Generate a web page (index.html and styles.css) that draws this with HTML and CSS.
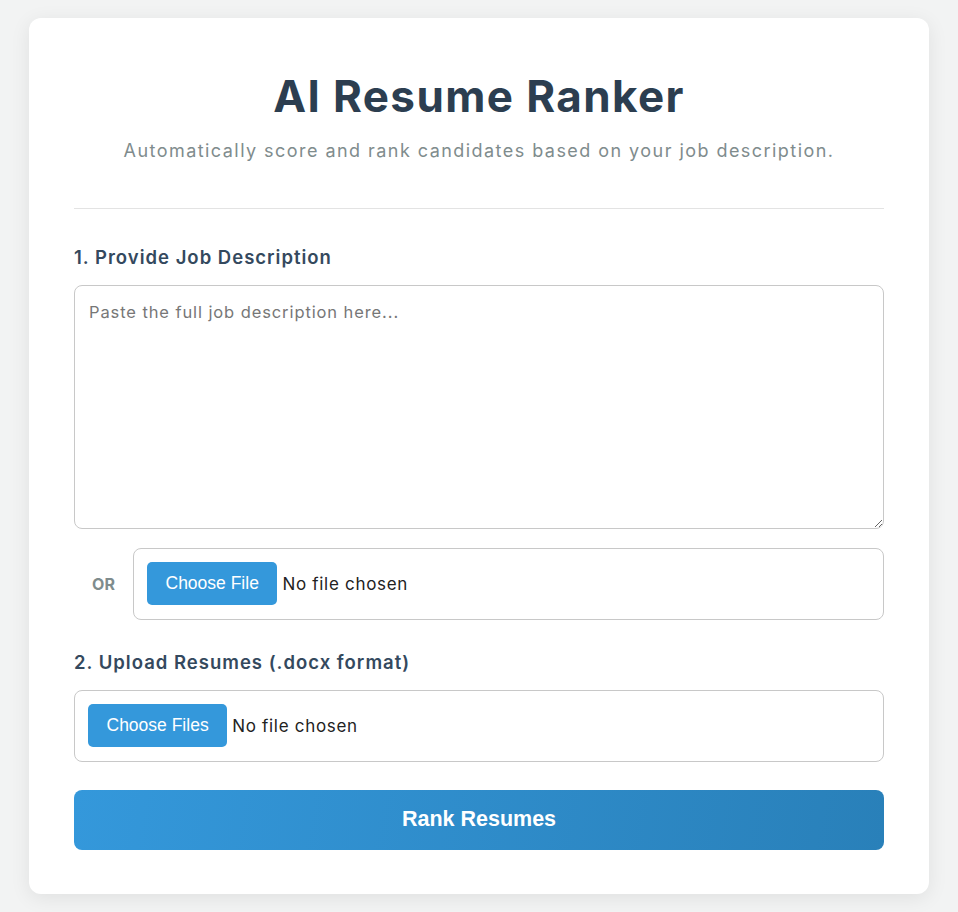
FILE: index.html
```html
<!DOCTYPE html>
<html lang="en">
<head>
<meta charset="utf-8">
<title>AI Resume Ranker</title>
<link rel="stylesheet" href="styles.css">
</head>
<body>
<main class="card">
  <header class="head">
    <h1 class="title">AI Resume Ranker</h1>
    <p class="subtitle">Automatically score and rank candidates based on your job description.</p>
  </header>
  <section class="group">
    <h2 class="label">1. Provide Job Description</h2>
    <textarea class="jd" placeholder="Paste the full job description here..."></textarea>
    <div class="or-row">
      <span class="or">OR</span>
      <div class="filebox"><span class="filebtn">Choose File</span><span class="filetext">No file chosen</span></div>
    </div>
  </section>
  <section class="group group-resumes">
    <h2 class="label">2. Upload Resumes (.docx format)</h2>
    <div class="filebox"><span class="filebtn">Choose Files</span><span class="filetext">No file chosen</span></div>
  </section>
  <button class="rank">Rank Resumes</button>
</main>
</body>
</html>
```
FILE: styles.css
```css
html, body { margin: 0; padding: 0; }
body {
  background: #f2f3f3;
  font-family: "Inter", "Open Sans", sans-serif;
  padding: 18px 29px;
  box-sizing: border-box;
  min-height: 912px;
}
.card {
  max-width: 900px;
  margin: 0 auto;
  background: #fff;
  border-radius: 12px;
  padding: 45px 45px 44px;
  box-sizing: border-box;
  box-shadow: 0 4px 20px rgba(0,0,0,0.08);
}
.head {
  text-align: center;
  border-bottom: 1px solid #e3e3e3;
  padding-bottom: 44px;
  margin-bottom: 36px;
}
.title {
  margin: 0;
  font-size: 44px;
  font-weight: 700;
  color: #2c3e50;
  line-height: 1.5;
  letter-spacing: 1.4px;
}
.subtitle {
  margin: 8px 0 0;
  font-size: 18px;
  color: #7f8c8d;
  line-height: 1.5;
  letter-spacing: 1.45px;
}
.group { margin-bottom: 30px; }
.group-resumes { margin-bottom: 28px; }
.label {
  margin: 0 0 14px;
  font-size: 18.5px;
  font-weight: 600;
  color: #34495e;
  line-height: 1.4;
  letter-spacing: 1px;
}
.jd {
  display: block;
  width: 100%;
  height: 244px;
  box-sizing: border-box;
  border: 1px solid #c8c8c8;
  border-radius: 8px;
  padding: 16px 14px;
  font-family: inherit;
  font-size: 16.5px;
  letter-spacing: 0.9px;
  color: #333;
  resize: vertical;
  margin: 0;
}
.jd::placeholder { color: #777; }
.or-row {
  display: flex;
  align-items: center;
  margin-top: 19px;
}
.or {
  width: 59px;
  text-align: center;
  font-weight: 700;
  font-size: 16px;
  color: #7f8c8d;
}
.filebox {
  flex: 1;
  display: flex;
  align-items: center;
  height: 72px;
  box-sizing: border-box;
  border: 1px solid #c8c8c8;
  border-radius: 8px;
  padding: 0 13px;
}
.filebtn {
  background: #3498db;
  color: #fff;
  font-family: "Liberation Sans", Arial, sans-serif;
  font-size: 17.5px;
  height: 43px;
  display: flex;
  align-items: center;
  padding: 0 18.5px;
  border-radius: 5px;
  margin-right: 5px;
}
.filetext {
  font-size: 17px;
  letter-spacing: 0.7px;
  color: #222;
}
.rank {
  display: block;
  width: 100%;
  height: 60px;
  border: none;
  border-radius: 8px;
  background: linear-gradient(100deg, #3498db, #2980b9);
  color: #fff;
  font-family: "Liberation Sans", Arial, sans-serif;
  font-weight: 700;
  font-size: 21.5px;
  cursor: pointer;
}
```
